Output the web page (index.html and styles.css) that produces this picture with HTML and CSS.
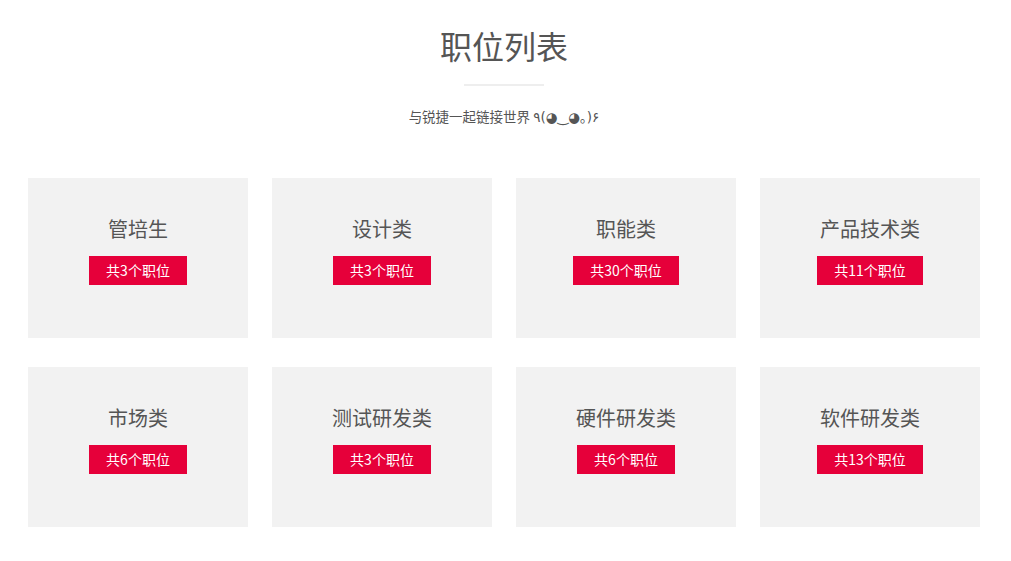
FILE: index.html
```html
<!DOCTYPE html>
<html lang="zh">
<head>
<meta charset="utf-8">
<title>职位列表</title>
<link rel="stylesheet" href="styles.css">
</head>
<body>
<div class="page">
  <header class="head">
    <h1 class="title">职位列表</h1>
    <div class="divider"></div>
    <p class="subtitle">与锐捷一起链接世界 <span class="kaomoji">٩(◕‿◕｡)۶</span></p>
  </header>
  <main class="grid">
    <div class="card"><div class="card-title">管培生</div><span class="badge">共3个职位</span></div>
    <div class="card"><div class="card-title">设计类</div><span class="badge">共3个职位</span></div>
    <div class="card"><div class="card-title">职能类</div><span class="badge">共30个职位</span></div>
    <div class="card"><div class="card-title">产品技术类</div><span class="badge">共11个职位</span></div>
    <div class="card"><div class="card-title">市场类</div><span class="badge">共6个职位</span></div>
    <div class="card"><div class="card-title">测试研发类</div><span class="badge">共3个职位</span></div>
    <div class="card"><div class="card-title">硬件研发类</div><span class="badge">共6个职位</span></div>
    <div class="card"><div class="card-title">软件研发类</div><span class="badge">共13个职位</span></div>
  </main>
</div>
</body>
</html>
```
FILE: styles.css
```css
html, body {
  margin: 0;
  padding: 0;
  background: #fff;
}
body {
  font-family: "Noto Sans CJK SC", "Noto Sans", "DejaVu Sans", sans-serif;
  color: #555;
}
.page {
  width: 1008px;
}
.head {
  display: flex;
  flex-direction: column;
  align-items: center;
}
.title {
  margin: 25px 0 0;
  font-size: 32px;
  line-height: 40px;
  font-weight: 400;
  color: #555;
}
.divider {
  margin-top: 19px;
  width: 80px;
  height: 2px;
  background: #eeeeee;
}
.subtitle {
  margin: 20px 0 0;
  height: 20px;
  font-size: 13.5px;
  line-height: 20px;
  color: #555;
}
.kaomoji {
  font-family: "DejaVu Sans", "Noto Sans CJK SC", sans-serif;
  font-size: 13.5px;
  line-height: 1;
}
.grid {
  margin: 52px auto 0;
  width: 952px;
  display: grid;
  grid-template-columns: repeat(4, 220px);
  column-gap: 24px;
  row-gap: 29px;
}
.card {
  height: 160px;
  box-sizing: border-box;
  padding-top: 39px;
  background: #f2f2f2;
  display: flex;
  flex-direction: column;
  align-items: center;
}
.card-title {
  font-size: 20px;
  line-height: 24px;
  color: #555;
}
.badge {
  margin-top: 15px;
  padding: 0 17px;
  height: 29px;
  line-height: 29px;
  font-size: 14px;
  color: #fff;
  background: #e6003a;
}
```
